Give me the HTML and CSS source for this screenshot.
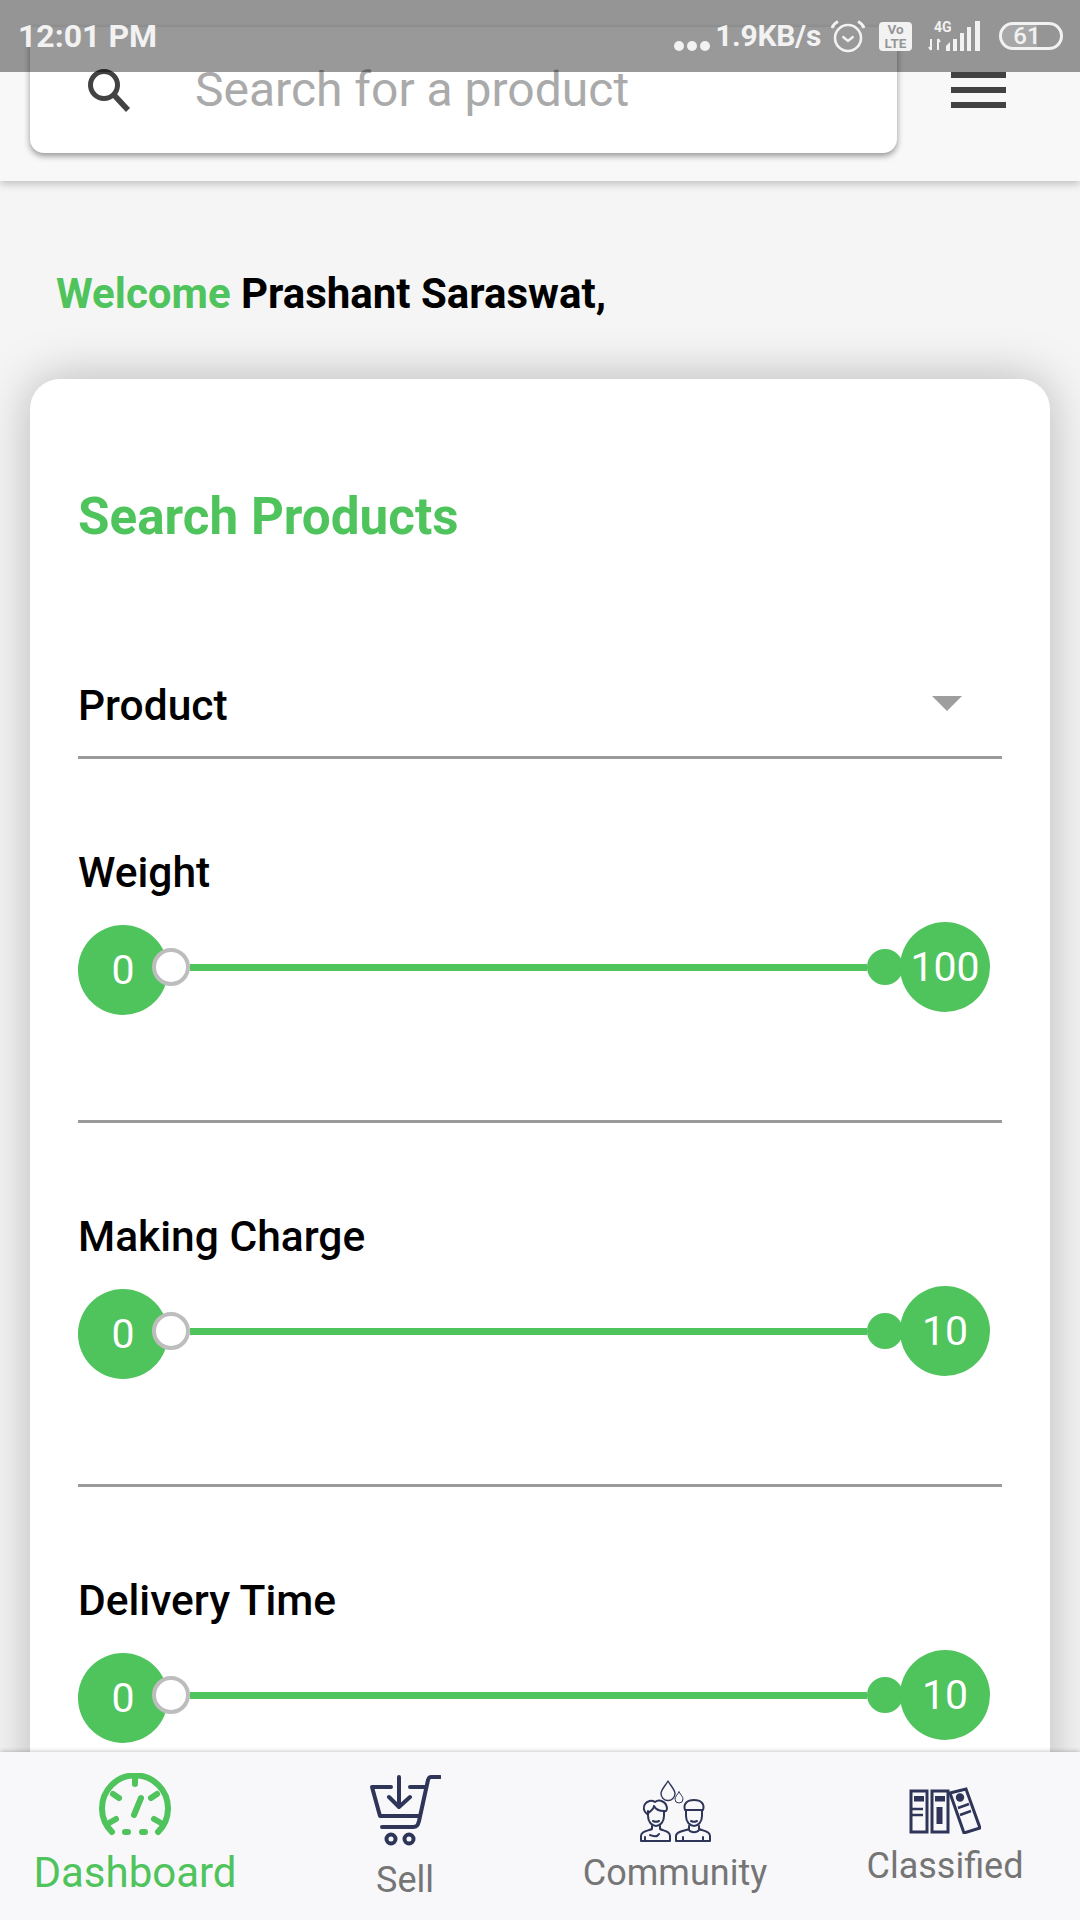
FILE: index.html
```html
<!DOCTYPE html>
<html lang="en">
<head>
<meta charset="utf-8">
<title>Dashboard</title>
<link rel="stylesheet" href="styles.css">
</head>
<body>
<div class="screen">
  <header class="topbar">
    <div class="searchbox">
      <svg class="search-icon" viewBox="0 0 48 48"><circle cx="20" cy="19" r="13.5" fill="none" stroke="#424242" stroke-width="5"/><path d="M30 29 L44 44" stroke="#424242" stroke-width="5.5" fill="none"/></svg>
      <span class="search-text">Search for a product</span>
    </div>
    <div class="burger"><i></i><i></i><i></i></div>
  </header>

  <main class="content">
    <h2 class="welcome"><span class="green">Welcome</span> Prashant Saraswat,</h2>
    <section class="card">
      <h1 class="card-title">Search Products</h1>
      <div class="select">
        <span class="label">Product</span>
        <span class="caret"></span>
      </div>
      <div class="field">
        <div class="label">Weight</div>
        <div class="slider">
          <span class="bubble bubble-min">0</span><span class="thumb-min"></span><span class="track"></span><span class="thumb-max"></span><span class="bubble bubble-max">100</span>
        </div>
      </div>
      <div class="field">
        <div class="label">Making Charge</div>
        <div class="slider">
          <span class="bubble bubble-min">0</span><span class="thumb-min"></span><span class="track"></span><span class="thumb-max"></span><span class="bubble bubble-max">10</span>
        </div>
      </div>
      <div class="field">
        <div class="label">Delivery Time</div>
        <div class="slider">
          <span class="bubble bubble-min">0</span><span class="thumb-min"></span><span class="track"></span><span class="thumb-max"></span><span class="bubble bubble-max">10</span>
        </div>
      </div>
    </section>
  </main>

  <div class="statusbar">
    <span class="time">12:01 PM</span>
    <div class="status-right">
      <span class="dots"><i></i><i></i><i></i></span>
      <span class="speed">1.9KB/s</span>
      <svg class="st-alarm" viewBox="0 0 36 34"><circle cx="18" cy="19" r="13" fill="none" stroke="#f2f2f2" stroke-width="2.6"/><path d="M12.5 17.5 L18 22 L23.5 17.5" fill="none" stroke="#f2f2f2" stroke-width="2.4"/><path d="M2 9 C3 6 5 4 8 2.5 M34 9 C33 6 31 4 28 2.5" fill="none" stroke="#f2f2f2" stroke-width="3"/></svg>
      <span class="volte">Vo<br>LTE</span>
      <svg class="st-signal" viewBox="0 0 60 32"><text x="6" y="12" class="st-4g">4G</text><path d="M3 19 V30 M3 30 L1 27 M10 30 V19 M10 19 L12 22" stroke="#f2f2f2" stroke-width="2" fill="none"/><path d="M18 26 L22 22 V31 H18 Z M25 19 H29 V31 H25 Z M32 13 H36 V31 H32 Z M39 7 H43 V31 H39 Z M47 1 H52 V31 H47 Z" fill="#f2f2f2"/></svg>
      <div class="battery"><span class="batt-level"></span><span class="batt-num">61</span></div>
    </div>
  </div>

  <nav class="bottomnav">
    <a class="nav-item nav-dash">
      <svg class="ic-dash" viewBox="0 0 72 64" fill="none" stroke="#4fc35c" stroke-width="6" stroke-linecap="round"><path d="M13 59 A33 33 0 1 1 59 59"/><path d="M36 4 V11 M14 21 L20 25 M58 21 L52 25 M10 50 L17 46 M62 50 L55 46 M42 25 L35 42 M26 59 H29 M43 59 H46"/></svg>
      <span class="nav-label active">Dashboard</span>
    </a>
    <a class="nav-item nav-sell">
      <svg class="ic-sell" viewBox="0 0 72 71" fill="none" stroke="#2e3559" stroke-width="4" stroke-linecap="round" stroke-linejoin="round"><path d="M71 2 H62 C60 2 60 3 59 5 L50 46 C49 50 48 52 44 52 H13"/><path d="M22 12 H3 L11 41 H50"/><path d="M41 12 H57"/><path d="M30 2 V31 M20 22 L30 32 L41 22"/><circle cx="22" cy="64" r="4.5"/><circle cx="40" cy="64" r="4.5"/></svg>
      <span class="nav-label">Sell</span>
    </a>
    <a class="nav-item nav-comm">
      <svg class="ic-comm" viewBox="0 0 72 62" fill="none" stroke="#2e3559" stroke-width="2" stroke-linecap="round" stroke-linejoin="round"><path d="M29 1 C26 6 22 10 22 13.5 A7 7 0 0 0 36 13.5 C36 10 32 6 29 1 Z" stroke-width="1.4"/><path d="M40 12 C38 15 36 17 36 19 A4 4 0 0 0 44 19 C44 17 42 15 40 12 Z" stroke-width="1"/><path d="M8 34 A6.5 6.5 0 1 1 16 22 C20 19 27 21 28 28 C28 30 27 32 25 31 C22 31 17 30 15 26 C15 29 12 31 8 34 Z"/><path d="M9 31 V36 C9 42 13 46 17 46 C21 46 25 42 25 36 V31"/><path d="M14 41 C16 42 18 42 20 41"/><path d="M13 46 V49 C9 51 2 51 2 56 V61 H31 V56 C31 51 25 51 21 49 V46"/><path d="M6 61 V57 M20 54 C18 58 14 56 11 55"/><path d="M46 30 C44 24 48 20 55 20 C62 20 66 24 64 30 C60 30 52 30 46 30 Z"/><path d="M47 30 V36 C47 42 51 46 55 46 C59 46 63 42 63 36 V30"/><path d="M52 41 C54 42 56 42 58 41"/><path d="M50 46 V49 C46 51 37 51 37 56 V61 H71 V56 C71 51 64 51 60 49 V46"/><path d="M44 61 V57 M64 61 V57 M50 50 C52 53 58 53 60 50"/></svg>
      <span class="nav-label">Community</span>
    </a>
    <a class="nav-item nav-class">
      <svg class="ic-class" viewBox="0 0 72 47" fill="none" stroke="#2e3559" stroke-width="3"><rect x="2" y="4" width="16" height="41"/><rect x="23" y="4" width="16" height="41"/><path d="M41 6 L57 2 L71 41 L55 46 Z"/><rect x="5" y="9" width="10" height="5.5" fill="#2e3559" stroke="none"/><path d="M1 22 H14 M1 28 H14" stroke-width="2.6"/><rect x="26" y="9" width="10" height="5.5" fill="#2e3559" stroke="none"/><rect x="27.5" y="20" width="6" height="17" fill="#2e3559" stroke="none"/><circle cx="51" cy="10.5" r="4.2" fill="#2e3559" stroke="none"/><path d="M49 21 L60 17 M51 28 L62 24" stroke-width="2.6"/></svg>
      <span class="nav-label">Classified</span>
    </a>
  </nav>
</div>
</body>
</html>
```
FILE: styles.css
```css
* { box-sizing: border-box; }
html, body { margin: 0; padding: 0; }
body { font-family: Roboto, "Noto Sans", sans-serif; background: #f5f5f5; }
.screen { position: relative; width: 1080px; height: 1920px; overflow: hidden; background: #f5f5f5; }

/* top bar */
.topbar { display: flex; align-items: flex-start; height: 181px; padding: 27px 0 0 30px; background: #f8f8f8; box-shadow: 0 3px 8px rgba(0,0,0,.22); position: relative; z-index: 1; }
.searchbox { display: flex; align-items: center; width: 867px; height: 126px; padding: 0 0 0 54px; background: #fff; border-radius: 0 0 14px 14px; box-shadow: 0 3px 6px rgba(0,0,0,.4); }
.search-icon { width: 48px; height: 48px; flex: none; }
.search-text { margin-left: 63px; font-size: 48px; line-height: 60px; color: #aaa; }
.burger { display: flex; flex-direction: column; gap: 9px; width: 55px; margin: 45px 0 0 54px; }
.burger i { display: block; height: 6px; background: #424242; }

/* status bar */
.statusbar { position: absolute; top: 0; left: 0; right: 0; height: 72px; z-index: 5; background: rgba(0,0,0,.4); display: flex; justify-content: space-between; align-items: flex-start; padding: 18px 17px 0 19px; color: #f2f2f2; }
.time { font-size: 32px; line-height: 36px; font-weight: 700; margin-left: -1px; }
.status-right { display: flex; align-items: flex-start; }
.dots { display: flex; gap: 3px; margin-top: 23px; }
.dots i { display: block; width: 10px; height: 10px; border-radius: 50%; background: #f2f2f2; }
.speed { margin-left: 5px; font-size: 30px; line-height: 36px; font-weight: 700; letter-spacing: -.3px; }
.st-alarm { width: 36px; height: 34px; margin: 1px 0 0 9px; }
.volte { width: 33px; height: 29px; margin: 4px 0 0 13px; border-radius: 4px; background: #f2f2f2; color: #969696; font-size: 13.5px; line-height: 13.5px; font-weight: 700; text-align: center; padding-top: 1px; }
.st-signal { width: 60px; height: 32px; margin: 2px 0 0 16px; overflow: visible; }
.st-4g { font: 700 14px Roboto, sans-serif; fill: #f2f2f2; }
.battery { position: relative; width: 64px; height: 28px; margin: 4px 0 0 11px; border: 3px solid #f2f2f2; border-radius: 14px; overflow: hidden; }
.batt-level { position: absolute; left: 0; top: 0; bottom: 0; width: 61%; background: rgba(255,255,255,.18); }
.batt-num { position: absolute; left: 0; right: 8px; top: -2px; text-align: center; font-size: 24px; line-height: 26px; font-weight: 500; color: #f2f2f2; }

/* content */
.content { padding: 0 30px; }
.welcome { margin: 0; padding: 83px 0 0 26px; height: 198px; font-size: 42px; line-height: 60px; font-weight: 700; color: #000; }
.green { color: #4fc35c; }
.card { background: #fff; border-radius: 30px; padding: 108px 48px 0; box-shadow: 0 0 50px rgba(0,0,0,.26); height: 1500px; }
.card-title { margin: 0 0 129px; font-size: 51.2px; line-height: 60px; font-weight: 700; color: #4fc35c; }
.label { font-size: 42.5px; line-height: 50px; font-weight: 500; color: #000; }
.select { display: flex; justify-content: space-between; align-items: center; height: 83px; padding: 0 40px 20px 0; border-bottom: 3px solid #9a9a9a; }
.caret { width: 0; height: 0; margin-top: -6px; border-left: 15px solid transparent; border-right: 15px solid transparent; border-top: 15px solid #9e9e9e; }
.field { padding: 89px 0 108px; border-bottom: 3px solid #9a9a9a; }
.slider { display: flex; align-items: center; height: 90px; margin-top: 24px; padding-right: 12px; }
.bubble { display: flex; align-items: center; justify-content: center; flex: none; width: 90px; height: 90px; border-radius: 50%; background: #4fc35c; color: #fff; font-size: 41px; }
.bubble-min { margin-top: 6px; }
.thumb-min { flex: none; width: 38px; height: 38px; margin-left: -16px; border-radius: 50%; background: #fff; border: 4px solid #bdbdbd; }
.track { flex: 1; height: 7px; background: #4fc35c; }
.thumb-max { flex: none; width: 36px; height: 36px; border-radius: 50%; background: #4fc35c; }
.bubble-max { margin-left: -3px; }

/* bottom nav */
.bottomnav { position: absolute; left: 0; right: 0; bottom: 0; height: 168px; z-index: 2; display: grid; grid-template-columns: repeat(4, 270px); background: #f8f8fa; box-shadow: 0 -1px 4px rgba(0,0,0,.2); }
.nav-item { display: flex; flex-direction: column; align-items: center; }
.nav-label { font-size: 40px; line-height: 48px; color: #757575; }
.nav-label.active { color: #4fc35c; }
.nav-dash { padding-top: 21px; }
.ic-dash { width: 72px; height: 64px; }
.nav-dash .nav-label { font-size: 42px; margin-top: 12px; }
.nav-sell { padding-top: 23px; }
.ic-sell { width: 72px; height: 71px; }
.nav-sell .nav-label { font-size: 36px; margin-top: 10px; }
.nav-comm { padding-top: 28px; }
.ic-comm { width: 72px; height: 62px; }
.nav-comm .nav-label { font-size: 36px; margin-top: 7px; }
.nav-class { padding-top: 35px; }
.ic-class { width: 72px; height: 47px; }
.nav-class .nav-label { font-size: 36px; margin-top: 8px; }
```
